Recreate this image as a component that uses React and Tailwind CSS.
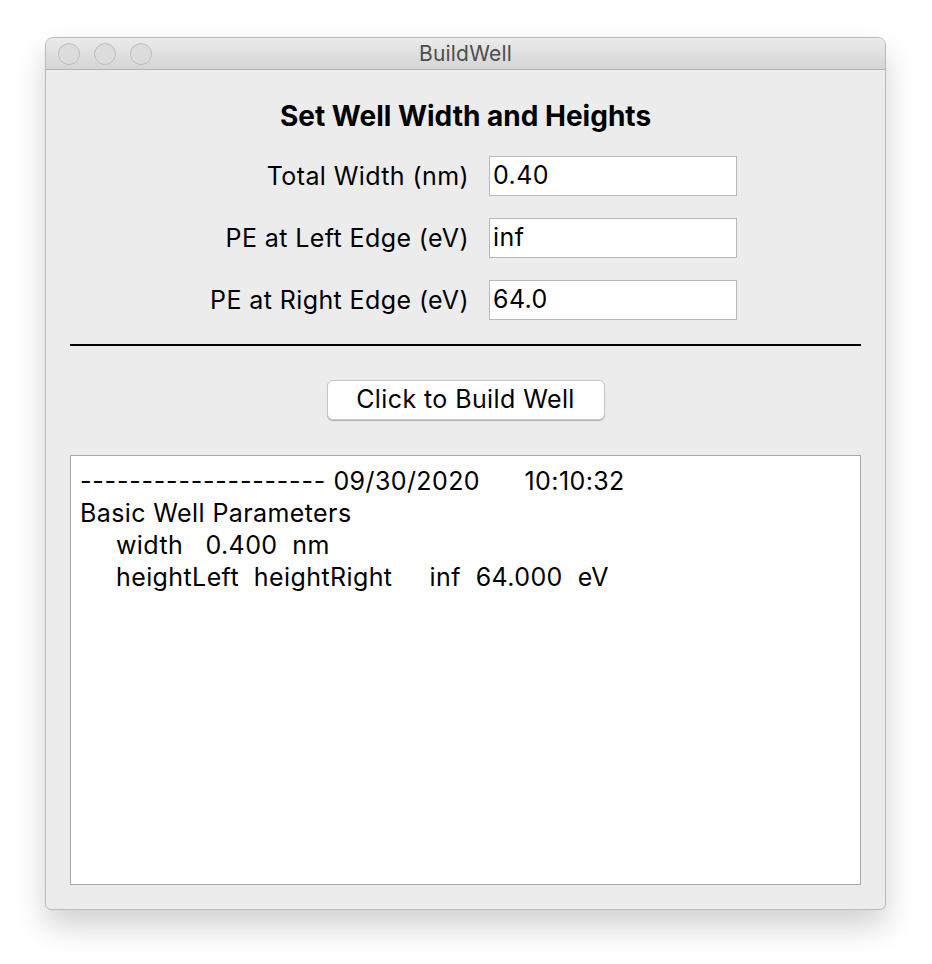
export default function App() {
  const rows = [
    { label: 'Total Width (nm)', value: '0.40' },
    { label: 'PE at Left Edge (eV)', value: 'inf' },
    { label: 'PE at Right Edge (eV)', value: '64.0' },
  ]

  return (
    <div className="w-[932px] h-[964px] bg-white pt-[37px] pl-[45px] font-['Inter','Liberation_Sans',sans-serif] text-black">
      <div className="w-[841px] h-[873px] rounded-t-[8px] rounded-b-[6px] border border-[#b9b9b9] bg-[#ececec] shadow-[0_16px_30px_rgba(0,0,0,0.18)] flex flex-col overflow-hidden">
        {/* title bar */}
        <div className="relative h-[32px] shrink-0 bg-gradient-to-b from-[#ebebeb] to-[#d5d5d5] border-b border-[#b4b4b4] flex items-center justify-center">
          <div className="absolute left-[12px] top-[5px] flex gap-[14px]">
            <span className="w-[22px] h-[22px] rounded-full bg-[#dcdcdc] border border-[#bdbdbd]" />
            <span className="w-[22px] h-[22px] rounded-full bg-[#dcdcdc] border border-[#bdbdbd]" />
            <span className="w-[22px] h-[22px] rounded-full bg-[#dcdcdc] border border-[#bdbdbd]" />
          </div>
          <span className="text-[21px] tracking-[0.2px] text-[#4d4d4d]">BuildWell</span>
        </div>

        {/* content */}
        <div className="flex-1 flex flex-col pt-[30px] pb-[24px] tracking-[0.4px]">
          <h1 className="text-center text-[28px] leading-[32px] font-bold tracking-normal">Set Well Width and Heights</h1>

          <div className="mt-[24px] flex flex-col gap-[22px]">
            {rows.map(r => (
              <div key={r.label} className="flex items-center">
                <div className="w-[423px] text-right text-[25px] leading-[30px]">{r.label}</div>
                <div className="ml-[20px] w-[248px] h-[40px] bg-white border border-[#b8b8b8] flex items-center px-[3px] text-[25px]">
                  {r.value}
                </div>
              </div>
            ))}
          </div>

          <div className="mt-[24px] mx-[24px] h-[2px] bg-black" />

          <div className="mt-[34px] flex justify-center">
            <button className="w-[278px] h-[40px] bg-white rounded-[6px] border border-[#c8c8c8] shadow-[0_1px_1px_rgba(0,0,0,0.25)] text-[25px] tracking-[0.4px]">
              Click to Build Well
            </button>
          </div>

          <div className="mt-[35px] mx-[24px] flex-1 bg-white border border-[#a8a8a8] pt-[9px] px-[9px] text-[25px] leading-[32px] whitespace-pre">
            <div><span className="tracking-[0.8px]">--------------------</span>{' 09/30/2020      10:10:32'}</div>
            <div>Basic Well Parameters</div>
            <div className="pl-[36px]">{'width   0.400  nm'}</div>
            <div className="pl-[36px]">{'heightLeft  heightRight     inf  64.000  eV'}</div>
          </div>
        </div>
      </div>
    </div>
  )
}
